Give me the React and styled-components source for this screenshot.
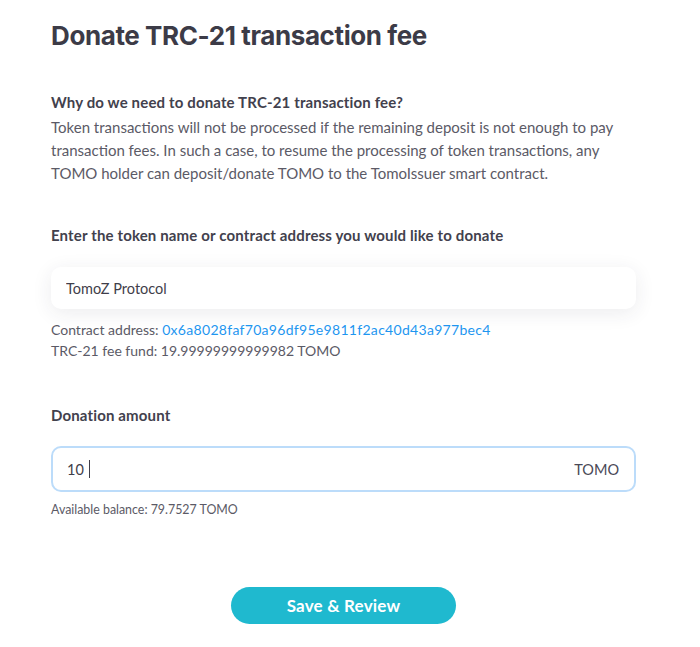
import React, { useState } from "react";
import styled, { createGlobalStyle } from "styled-components";

const GlobalStyle = createGlobalStyle`
  body {
    margin: 0;
    background: #ffffff;
    font-family: "Lato", "Open Sans", sans-serif;
    color: #3f3e4a;
  }
  * { box-sizing: border-box; }
`;

const Page = styled.div`
  width: 585px;
  margin-left: 51px;
  padding-top: 20px;
  display: flex;
  flex-direction: column;
`;

const Title = styled.h1`
  margin: 0;
  font-family: "Inter", sans-serif;
  font-weight: 700;
  font-size: 26px;
  line-height: 32px;
  color: #3c3b47;
  letter-spacing: -0.4px;
`;

const Section = styled.section`
  margin-top: ${(p) => p.$top || 0}px;
  display: flex;
  flex-direction: column;
`;

const Label = styled.div`
  font-size: 15px;
  font-weight: 700;
  line-height: 20px;
  letter-spacing: 0.15px;
  color: #42414d;
`;

const Paragraph = styled.p`
  margin: 4px 0 0;
  font-size: 15px;
  line-height: 23px;
  color: #5b5a66;
`;

const Field = styled.div`
  margin-top: ${(p) => p.$top || 22}px;
  height: ${(p) => (p.$focused ? 46 : 42)}px;
  display: flex;
  align-items: center;
  padding: 0 15px 0 ${(p) => (p.$focused ? 14 : 15)}px;
  border-radius: 10px;
  background: #fff;
  border: ${(p) => (p.$focused ? "2px solid #bcdcfa" : "none")};
  box-shadow: ${(p) =>
    p.$focused ? "none" : "0 4px 20px rgba(40, 40, 70, 0.09)"};
`;

const Input = styled.input`
  flex: ${(p) => (p.$fit ? "none" : 1)};
  border: none;
  outline: none;
  background: transparent;
  font-family: inherit;
  font-size: 14.5px;
  color: #3f3e4a;
  padding: 0;
`;

const Caret = styled.span`
  width: 1px;
  height: 18px;
  background: #3f3e4a;
`;

const Spacer = styled.span`
  flex: 1;
`;

const Unit = styled.span`
  font-size: 14.5px;
  color: #4a4956;
`;

const Info = styled.div`
  margin-top: 10px;
  font-size: 14px;
  line-height: 21px;
  color: #5b5a66;
`;

const Link = styled.a`
  color: #1e96f0;
  text-decoration: none;
  letter-spacing: 0.3px;
`;

const Hint = styled.div`
  margin-top: 10px;
  font-size: 12.4px;
  color: #5b5a66;
`;

const Footer = styled.div`
  display: flex;
  justify-content: center;
  margin-top: 70px;
`;

const Button = styled.button`
  width: 225px;
  height: 37px;
  border: none;
  border-radius: 19px;
  background: #1fb9cf;
  color: #fff;
  font-family: inherit;
  font-size: 17px;
  font-weight: 700;
  letter-spacing: 0.2px;
  cursor: pointer;
`;

export default function App() {
  const [token, setToken] = useState("TomoZ Protocol");
  const [amount, setAmount] = useState("10");

  return (
    <>
      <GlobalStyle />
      <Page>
        <Title>Donate TRC-21 transaction fee</Title>

        <Section $top={40}>
          <Label>Why do we need to donate TRC-21 transaction fee?</Label>
          <Paragraph>
            Token transactions will not be processed if the remaining deposit is
            not enough to pay transaction fees. In such a case, to resume the
            processing of token transactions, any TOMO holder can
            deposit/donate TOMO to the TomoIssuer smart contract.
          </Paragraph>
        </Section>

        <Section $top={40}>
          <Label>Enter the token name or contract address you would like to donate</Label>
          <Field>
            <Input value={token} onChange={(e) => setToken(e.target.value)} />
          </Field>
          <Info>
            Contract address:{" "}
            <Link href="#">0x6a8028faf70a96df95e9811f2ac40d43a977bec4</Link>
            <br />
            TRC-21 fee fund: 19.99999999999982 TOMO
          </Info>
        </Section>

        <Section $top={44}>
          <Label>Donation amount</Label>
          <Field $focused $top={21}>
            <Input
              $fit
              value={amount}
              onChange={(e) => setAmount(e.target.value)}
              style={{ width: `${amount.length * 8 + 6}px` }}
            />
            <Caret />
            <Spacer />
            <Unit>TOMO</Unit>
          </Field>
          <Hint>Available balance: 79.7527 TOMO</Hint>
        </Section>

        <Footer>
          <Button type="button">Save &amp; Review</Button>
        </Footer>
      </Page>
    </>
  );
}
